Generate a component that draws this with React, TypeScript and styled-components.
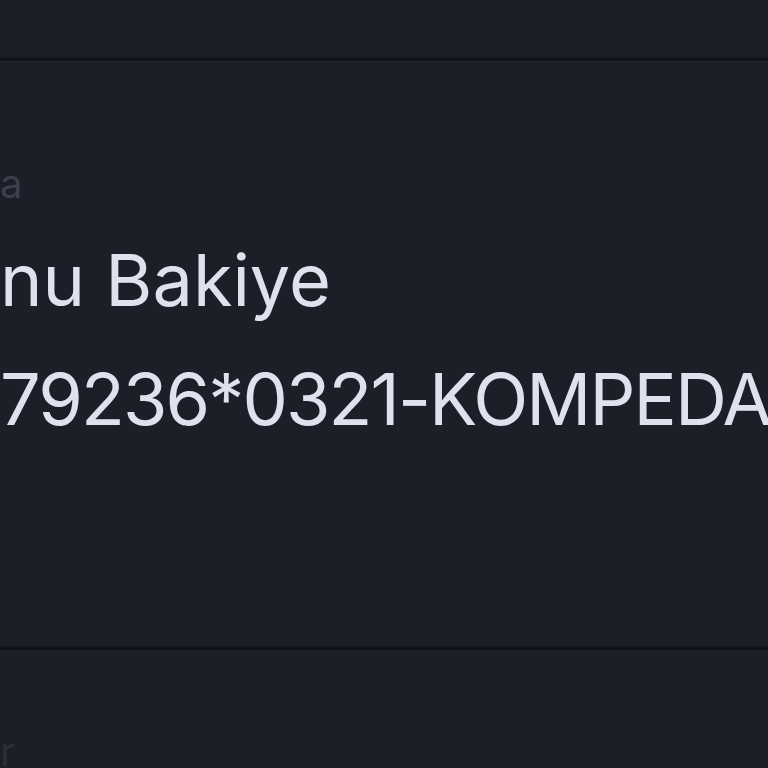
import styled, { createGlobalStyle } from 'styled-components';

const GlobalStyle = createGlobalStyle`
  html, body {
    margin: 0;
    padding: 0;
    background: #1c1f28;
  }
  body {
    font-family: Inter, "Noto Sans", "Liberation Sans", sans-serif;
    -webkit-font-smoothing: antialiased;
  }
`;

type Detail = {
  label: [string, string];
  title: [string, string];
  reference: [string, string];
};

const detail: Detail = {
  label: ['Açıklam', 'a'],
  title: ['Dönem So', 'nu Bakiye'],
  reference: ['45', '79236*0321-KOMPEDAŞ'],
};

const Screen = () => (
  <Page>
    <TopBar />
    <Divider />
    <Section>
      <Line $size={40} $height={48} $tone="dim">
        <Overflow>
          <Hidden>{detail.label[0]}</Hidden>
        </Overflow>
        {detail.label[1]}
      </Line>
      <Line $size={72} $height={88} $gap={28}>
        <Overflow>
          <Hidden>{detail.title[0]}</Hidden>
        </Overflow>
        {detail.title[1]}
      </Line>
      <Line $size={72} $height={88} $gap={31} $tracking={-1.9}>
        <Overflow>
          <Hidden>{detail.reference[0]}</Hidden>
        </Overflow>
        {detail.reference[1]}
      </Line>
    </Section>
    <Divider />
    <NextRow>
      <Line $size={40} $height={48} $tone="faint">
        <Overflow>
          <Hidden>Tuta</Hidden>
        </Overflow>
        r
      </Line>
    </NextRow>
  </Page>
);

export default function App() {
  return (
    <>
      <GlobalStyle />
      <Screen />
    </>
  );
}

const Page = styled.div`
  width: 768px;
  height: 768px;
  overflow: hidden;
  display: flex;
  flex-direction: column;
  background: #1c1f28;
`;

const TopBar = styled.div`
  height: 58px;
  flex-shrink: 0;
  background: #1c1f28;
`;

const Divider = styled.div`
  height: 3px;
  flex-shrink: 0;
  background: #0f121a;
  box-shadow: 0 -1px 1px #151820, 0 1px 1px #20232c;
`;

const Section = styled.div`
  height: 586px;
  flex-shrink: 0;
  box-sizing: border-box;
  padding-top: 99px;
  display: flex;
  flex-direction: column;
`;

const NextRow = styled.div`
  flex: 1;
  padding-top: 78px;
  display: flex;
  flex-direction: column;
`;

const Line = styled.div<{
  $size: number;
  $height: number;
  $gap?: number;
  $tracking?: number;
  $tone?: 'dim' | 'faint';
}>`
  display: flex;
  white-space: nowrap;
  margin-top: ${(p) => p.$gap ?? 0}px;
  font-size: ${(p) => p.$size}px;
  line-height: ${(p) => p.$height}px;
  letter-spacing: ${(p) => p.$tracking ?? 0}px;
  font-weight: 400;
  color: ${(p) => (p.$tone === 'dim' ? '#3b404c' : p.$tone === 'faint' ? '#2a2e38' : '#dfe2ee')};
`;

/* zero-width box: the start of the text spills off the left edge */
const Overflow = styled.span`
  width: 0;
  display: flex;
  justify-content: flex-end;
`;

const Hidden = styled.span`
  flex-shrink: 0;
`;
